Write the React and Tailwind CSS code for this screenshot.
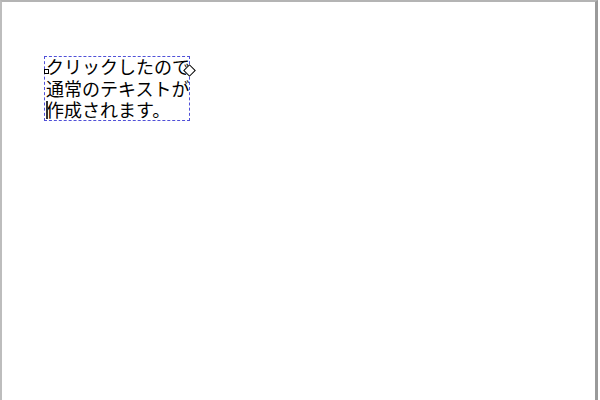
import React from "react";

function App() {
  return (
    <div className="w-[600px] h-[400px] bg-white overflow-hidden">
      <div className="h-[402px] border-t-2 border-l-2 border-r-[3px] border-t-[#b4b4b4] border-l-[#bdbdbd] border-r-[#9a9a9a] mr-[2px] pt-[54px] pl-[42px]">
        <div className="relative w-[146px] h-[65px] border border-dashed border-[#5050d8]">
          <p
            className="pl-[1px] text-[18px] leading-[21.5px] text-black whitespace-nowrap -mt-[1px]"
            style={{ fontFamily: '"Noto Sans CJK JP", sans-serif' }}
          >
            クリックしたので
            <br />
            通常のテキストが
            <br />
            作成されます。
          </p>
          <span className="absolute left-[-1px] top-[12px] w-[5px] h-[5px] border border-black bg-white" />
          <span className="absolute right-[-5px] top-[9px] w-[9px] h-[9px] rotate-45 border border-black bg-white" />
          <span className="absolute left-[1px] top-[44px] w-[2px] h-[18px] bg-[#333]" />
        </div>
      </div>
    </div>
  );
}

export default App;
